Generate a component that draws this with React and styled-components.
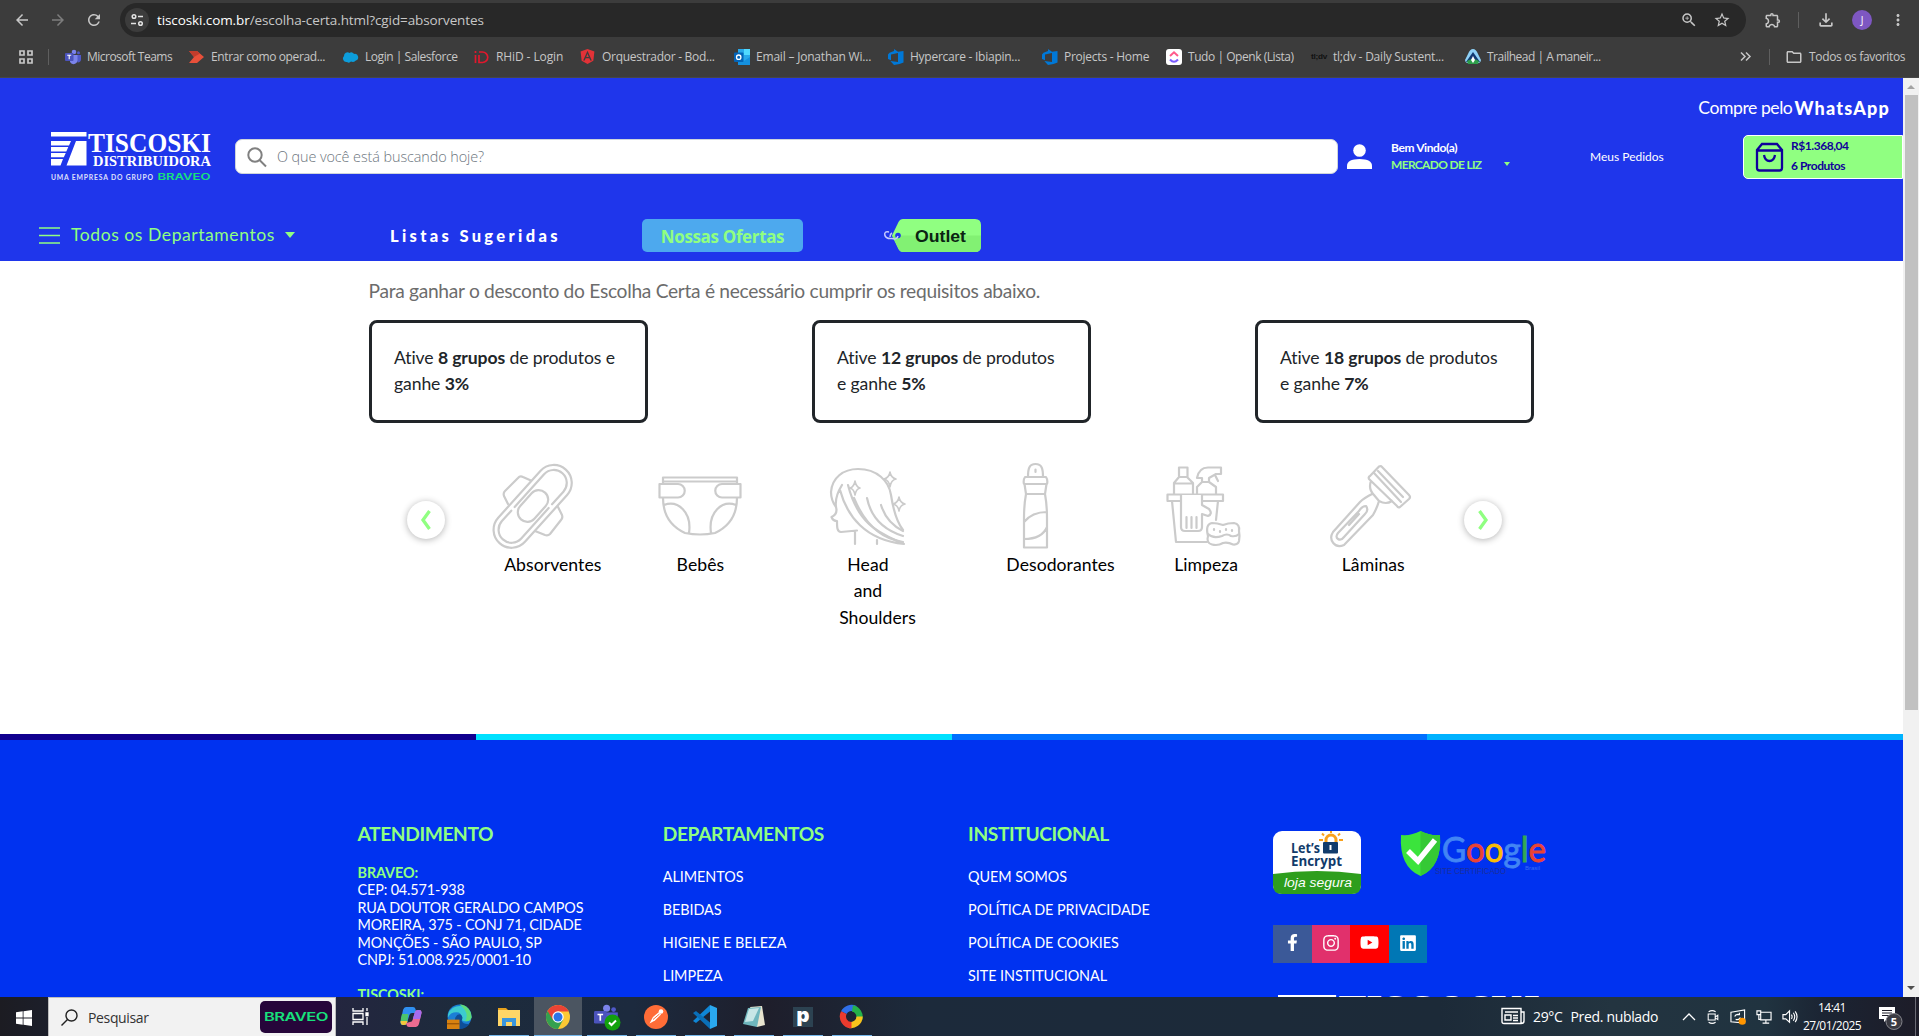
import React from "react";
import styled, { createGlobalStyle, css } from "styled-components";
import { FaFacebookF, FaInstagram, FaYoutube, FaLinkedin, FaAngular } from "react-icons/fa";
import {
  MdArrowBack, MdArrowForward, MdRefresh, MdOutlineZoomIn, MdStarBorder,
  MdOutlineExtension, MdOutlineFileDownload, MdMoreVert, MdOutlineFolder,
} from "react-icons/md";

const Global = createGlobalStyle`
  * { box-sizing: border-box; }
  html, body { margin: 0; height: 1036px; overflow: hidden; background: #fff; }
  body { font-family: Lato, "Liberation Sans", sans-serif; }
  svg { display: block; flex: none; overflow: visible; }
`;

const ui = `"Open Sans", "Noto Sans", sans-serif`;

const Screen = styled.div`
  width: 1919px;
  height: 1036px;
  display: flex;
  flex-direction: column;
  overflow: hidden;
`;

/* ---------- browser ---------- */
const Chrome = styled.header`
  height: 78px;
  flex: none;
  background: #3c3c3c;
  border-bottom: 1px solid #474747;
  font-family: ${ui};
  color: #c7c7c7;
`;
const Toolbar = styled.div`
  display: flex;
  align-items: center;
  height: 40px;
  padding: 3px 0 3px 13px;
`;
const NavIcons = styled.div`
  display: flex;
  gap: 18px;
  width: 107px;
  flex: none;
  align-items: center;
  color: #c7c7c7;
  svg:nth-child(2) { color: #7d7d7d; }
`;
const Omnibox = styled.div`
  display: flex;
  flex: none;
  align-items: center;
  width: 1626px;
  height: 34px;
  padding: 0 15px 0 5px;
  border-radius: 17px;
  background: #282828;
  font-size: 13.5px;
  letter-spacing: ${(p) => p.$ls}px;
  white-space: pre;
  b { font-weight: 400; color: #fff; }
`;
const SiteInfo = styled.span`
  width: 24px;
  height: 24px;
  margin-right: 8px;
  border-radius: 50%;
  background: #3c3c3c;
  display: grid;
  place-items: center;
`;
const OmniEnd = styled.span`
  margin-left: auto;
  display: flex;
  gap: 15px;
`;
const ToolEnd = styled.div`
  display: flex;
  flex: none;
  align-items: center;
  padding-left: 18px;
`;
const Sep = styled.i`
  width: 1px;
  height: 16px;
  flex: none;
  background: #5f5f5f;
  margin: ${(p) => p.$m};
`;
const Avatar = styled.span`
  width: 20px;
  height: 20px;
  margin: 0 17px 0 16px;
  border-radius: 50%;
  background: #7e57c2;
  color: #fff;
  font-size: 10px;
  display: grid;
  place-items: center;
`;
const Bookmarks = styled.div`
  display: flex;
  align-items: center;
  height: 33px;
  padding-left: 19px;
  font-size: 12px;
`;
const Bookmark = styled.div`
  display: flex;
  align-items: center;
  gap: 6px;
  width: ${(p) => p.$w}px;
  white-space: nowrap;
  letter-spacing: ${(p) => p.$ls}px;
`;
const BookmarkEnd = styled.div`
  display: flex;
  align-items: center;
  margin-left: auto;
  padding-right: 14px;
`;

/* ---------- page ---------- */
const Viewport = styled.div`
  display: flex;
  height: 919px;
  flex: none;
  overflow: hidden;
`;
const Page = styled.div`
  width: 1903px;
  flex: none;
  display: flex;
  flex-direction: column;
`;
const Scrollbar = styled.div`
  width: 16px;
  background: #f1f1f1;
  display: flex;
  flex-direction: column;
  align-items: center;
  justify-content: space-between;
`;
const ScrollTop = styled.div`
  display: flex;
  flex-direction: column;
  align-items: center;
  padding-top: 7px;
  gap: 6px;
  &::after { content: ""; width: 13px; height: 615px; background: #c1c1c1; }
`;
const Arrow = styled.i`
  width: 0;
  border: 4px solid transparent;
  ${(p) => p.$up
    ? css`border-top: 0; border-bottom-color: #a3a3a3;`
    : css`border-bottom: 0; border-top-color: #505050; margin-bottom: 7px;`}
`;

const Header = styled.div`
  height: 183px;
  background: #1f36eb;
  color: #fff;
`;
const TopLine = styled.div`
  height: 57px;
  padding: 18px 13px 0 0;
  display: flex;
  justify-content: flex-end;
  gap: 2px;
  font-size: 17.6px;
  line-height: 24px;
  letter-spacing: -0.45px;
  b { font-size: 18px; letter-spacing: 1.2px; font-weight: 900; }
`;
const MainRow = styled.div`
  height: 44px;
  padding: 0 0 1px 51px;
  display: flex;
  align-items: center;
`;
const Search = styled.div`
  width: 1103px;
  height: 35px;
  margin: 0 9px 0 24px;
  padding-left: 11px;
  display: flex;
  align-items: center;
  gap: 10px;
  background: #fff;
  border: 1px solid #ced4da;
  border-radius: 7px;
  color: #6c757d;
  font: 300 14.4px ${ui};
  letter-spacing: -0.08px;
`;
const Account = styled.div`
  width: 199px;
  margin-left: 19px;
  padding-bottom: 2px;
  display: flex;
  flex-direction: column;
  font-weight: 700;
  font-size: 12px;
  line-height: 17px;
  letter-spacing: -0.4px;
`;
const AccountName = styled.span`
  display: flex;
  align-items: center;
  gap: 23px;
  color: #90ff81;
  letter-spacing: -0.67px;
`;
const Caret = styled.i`
  width: 0;
  border: solid transparent;
  border-width: ${(p) => p.$s}px ${(p) => p.$s * 0.85}px 0;
  border-top-color: #90ff81;
`;
const Orders = styled.div`
  width: 153px;
  font-size: 12px;
  padding-bottom: 1px;
`;
const Cart = styled.div`
  width: 160px;
  height: 44px;
  margin-top: 1px;
  padding-left: 11px;
  display: flex;
  align-items: center;
  gap: 8px;
  background: #90ff81;
  border: 1px solid #fff;
  border-radius: 5px 0 0 5px;
  color: #10009b;
  font-weight: 700;
  font-size: 12px;
  line-height: 20px;
  letter-spacing: -0.45px;
`;
const CartText = styled.div`
  padding-bottom: 3px;
`;
const Nav = styled.nav`
  height: 82px;
  padding: 31px 0 0 39px;
  display: flex;
  align-items: center;
`;
const Departments = styled.div`
  width: 351px;
  padding-bottom: 2px;
  display: flex;
  align-items: center;
  gap: 10px;
  color: #90ff81;
  font-size: 17.6px;
  letter-spacing: 0.53px;
  svg { margin: 1px 1px 0 0; }
`;
const Suggested = styled.div`
  width: 252px;
  font-size: 16.5px;
  font-weight: 900;
  letter-spacing: 3.33px;
`;
const Offers = styled.div`
  width: 161px;
  height: 33px;
  margin-right: 81px;
  padding-top: 1px;
  display: grid;
  place-items: center;
  border-radius: 5px;
  background: #4da9ee;
  color: #90ff81;
  font: 700 17px ${ui};
  letter-spacing: -0.35px;
`;

const Main = styled.main`
  height: 473px;
  padding: 17px 369px 0;
  background: #fff;
`;
const Intro = styled.p`
  margin: 0 0 0 -0.5px;
  font-size: 19.2px;
  line-height: 26px;
  letter-spacing: -0.3px;
  color: #6c6c6c;
`;
const Goals = styled.div`
  display: flex;
  justify-content: space-between;
  margin-top: 16px;
`;
const Goal = styled.div`
  width: 279px;
  height: 103px;
  padding: 22px 25px 0 22px;
  border: 3px solid #212529;
  border-radius: 8px;
  font-size: 17.6px;
  line-height: 26.4px;
  letter-spacing: -0.11px;
  color: #212529;
  b { font-weight: 700; }
`;
const Carousel = styled.div`
  display: flex;
  align-items: flex-start;
  padding: 40px 0 0 38px;
`;
const Round = styled.button`
  width: 38px;
  height: 38px;
  margin-top: 38px;
  padding: 0;
  border: 0;
  border-radius: 50%;
  background: #fff;
  box-shadow: 0 1px 7px rgba(0, 0, 0, 0.3);
  display: grid;
  place-items: center;
`;
const Items = styled.div`
  display: grid;
  grid-template-columns: repeat(6, 167.6px);
  margin: 0 9px 0 4px;
`;
const Item = styled.div`
  display: flex;
  flex-direction: column;
  align-items: center;
`;
const Picture = styled.div`
  height: 86px;
  margin-bottom: 3px;
  display: flex;
  align-items: center;
`;
const Caption = styled.div`
  display: flex;
  flex-direction: column;
  align-items: center;
  padding-left: ${(p) => p.$shift}px;
  color: #000;
  font-size: 17.6px;
  line-height: 26.4px;
  letter-spacing: 0.05px;
  span:nth-child(3) { padding-left: 19px; }
`;

const Stripes = styled.div`
  height: 6px;
  display: grid;
  grid-template-columns: repeat(4, 1fr);
`;
const Stripe = styled.i`
  background: ${(p) => p.$c};
`;
const Footer = styled.footer`
  height: 257px;
  flex: none;
  padding: 82px 0 0 357.5px;
  display: grid;
  grid-template-columns: 305.3px 305.3px 305.3px 1fr;
  background: #0032f0;
  color: #fff;
  overflow: hidden;
`;
const FootTitle = styled.h4`
  margin: 0;
  font-size: 19.2px;
  line-height: 24px;
  font-weight: 700;
  letter-spacing: -0.4px;
  color: #90ff81;
`;
const Address = styled.div`
  margin-top: 18px;
  font-size: 14.4px;
  line-height: 17.4px;
  letter-spacing: -0.14px;
  white-space: nowrap;
  b { color: #90ff81; display: block; letter-spacing: -0.1px; }
`;
const Links = styled.div`
  margin-top: 14px;
  display: flex;
  flex-direction: column;
  font-size: 14.4px;
  line-height: 33px;
  letter-spacing: -0.06px;
`;
const Badges = styled.div`
  padding-top: 9px;
`;
const Seals = styled.div`
  display: flex;
  gap: 40px;
`;
const Social = styled.div`
  display: flex;
  margin: 31px 0 30px;
`;
const SocialLink = styled.a`
  width: 38.5px;
  height: 38px;
  padding-bottom: 3px;
  display: grid;
  place-items: center;
  background: ${(p) => p.$c};
  color: #fff;
`;
const FootLogo = styled.div`
  padding-left: 5px;
`;

/* ---------- taskbar ---------- */
const Taskbar = styled.div`
  height: 39px;
  flex: none;
  display: flex;
  background: linear-gradient(90deg, #1c1c22 0%, #1c1f2c 3%, #24253f 17%, #1d2b3c 24%, #1c2a3e 33%, #1e1e2b 40%, #1c2a3b 48%, #1c2a38 75%, #233440 84%, #203340 92%, #1b2433 95%, #1d1c28 100%);
  color: #fff;
  font-family: ${ui};
`;
const Start = styled.div`
  width: 48px;
  padding-top: 2px;
  display: grid;
  place-items: center;
`;
const TaskSearch = styled.div`
  width: 288px;
  display: flex;
  align-items: center;
  padding: 0 3px 0 12px;
  background: #f2f2f2;
  border: 1px solid #bdbdbd;
  border-bottom: 0;
  color: #333;
  font-size: 14px;
  letter-spacing: -0.35px;
  span { margin-left: 10px; }
`;
const Brand = styled.div`
  width: 72px;
  height: 32px;
  margin-left: auto;
  border-radius: 5px;
  background: #26063a;
  display: grid;
  place-items: center;
`;
const TaskIcons = styled.div`
  display: flex;
  gap: 1px;
  > :first-child { margin-right: 1.5px; }
`;
const Task = styled.div`
  width: ${(p) => (p.$open && !p.$on ? "40px" : "48px")};
  margin: 0 ${(p) => (p.$open && !p.$on ? "4px" : "0")};
  height: 39px;
  display: flex;
  align-items: center;
  justify-content: center;
  background: ${(p) => (p.$on ? "#4b5561" : "none")};
  box-shadow: ${(p) => (p.$open ? "inset 0 -1px 0 #76b9ed" : "none")};
`;
const Tray = styled.div`
  margin-left: auto;
  display: flex;
  align-items: center;
  font-size: 14px;
  white-space: nowrap;
`;
const Weather = styled.div`
  width: 181px;
  padding-bottom: 1px;
  display: flex;
  gap: 8px;
  align-items: center;
  letter-spacing: ${(p) => p.$ls}px;
`;
const TrayIcons = styled.div`
  display: flex;
  align-items: center;
  width: 120px;
  gap: 10px;
`;
const Clock = styled.div`
  width: 60px;
  margin-right: 16px;
  text-align: center;
  font-size: 12px;
  line-height: 17.5px;
  letter-spacing: -0.55px;
`;
const Desktop = styled.i`
  width: 1px;
  height: 39px;
  margin: 0 3px 0 12px;
  background: #6b6b75;
`;

/* ---------- drawings ---------- */
const Logo = ({ width, height }) => (
  <svg width={width} height={height} viewBox="0 0 160 51" fill="#fff">
    <path d="M0 1h35.500v4.500H0zM0 10h20l-2 4.500H0zM0 16h17.300l-2 4.500H0zM0 22h14.800l-2 4.300H0zM0 28h12l-2.500 6.500H0zM25 10h10.500v24.500H15.500z" />
    <text x="37" y="20.500" fontFamily="Liberation Serif" fontWeight="700" fontSize="28" textLength="123" lengthAdjust="spacingAndGlyphs">TISCOSKI</text>
    <text x="42" y="35" fontFamily="Liberation Serif" fontWeight="700" fontSize="15.500" textLength="118" lengthAdjust="spacingAndGlyphs">DISTRIBUIDORA</text>
    <text x="0" y="48.500" fontFamily="Lato" fontWeight="700" fontSize="6.800" textLength="102" lengthAdjust="spacing" opacity=".85">UMA EMPRESA DO GRUPO</text>
    <text x="106.500" y="49" fontFamily="Inter" fontWeight="600" fontSize="9" fill="#17e07c" textLength="53" lengthAdjust="spacingAndGlyphs">BRAVEO</text>
  </svg>
);
const Lines = ({ w, h, children }) => (
  <svg width={w} height={h} viewBox={`0 0 ${w} ${h}`} fill="none" stroke="#cbcbcb" strokeWidth="2.200" strokeLinejoin="round" strokeLinecap="round">{children}</svg>
);
const Pad = () => (
  <Lines w={84} h={84}>
    <path d="M41 17l-9-4q-3-1.500-5 1L14 27q-2 2-1 5l4 8M67 43l4 8q1 3-1 5L59 70q-2 2-5 1l-10-4" />
    <g transform="translate(42 42) rotate(-48)">
      <rect x="-50" y="-18" width="99" height="36" rx="18" fill="#fff" />
      <path d="M-13-13H31a13 13 0 0 1 0 26H14M9 13H-32a13 13 0 0 1 0-26H-18" />
      <rect x="-18" y="-9.500" width="36" height="19" rx="9.500" />
    </g>
  </Lines>
);
const Diaper = () => (
  <Lines w={84} h={60}>
    <path d="M5 8V1.500H79V8M5 5.500H79M1.500 8H20a6.500 6.500 0 0 1 0 13.500H1.500zM82.500 8H64a6.500 6.500 0 0 0 0 13.500H82.500zM5 22C5 38 12 50 27 57Q42 60 57 57C72 50 79 38 79 22M6 29C20 24 34 36 31 57M78 29C64 24 50 36 53 57" />
  </Lines>
);
const Hair = () => (
  <Lines w={77} h={77}>
    <path d="M7 39C4 35 2 30 2 24C3 10 14 1 29 1C48 1 60 13 62 27C64 40 67 53 74 62M7 39Q9 46 2.500 49Q4 53 8 53C8 59 8 64 12 64L28 62.500M26 64V76M48 72V76M13 17C8 25 6 32 7 39M11 22C18 48 36 72 75 76C54 66 30 60 19 17" />
    <path d="M25 30C34 52 48 70 74 74M38 30C42 50 55 62 74 68M52 37C56 50 64 58 74 63" />
    <path strokeWidth="1.600" d="M26 13Q27 19 31 20Q27 21 26 27Q25 21 21 20Q25 19 26 13zM61 4Q62 10 67 11Q62 12 61 19Q60 12 55 11Q60 10 61 4zM70 29Q71 35 76 36Q71 37 70 43Q69 37 64 36Q69 35 70 29z" />
  </Lines>
);
const Spray = () => (
  <Lines w={27} h={86}>
    <path d="M6 14C6 6 7 1 13.500 1S21 6 21 14M3 14H24Q26 17 25 21H2Q1 17 3 14zM2.500 21 4 31H23L24.500 21M4 31Q2 42 2 55V84.500H25V55Q25 42 23 31M2 59Q10 49 25 49M2 76Q20 76 25 64M13.500 6.500V9" />
  </Lines>
);
const Bucket = () => (
  <Lines w={75} h={80}>
    <path d="M1.500 28.500H57V35H1.500zM6 35 10 76H41M52 35 50 54M8 28V17L13 11H21L27 17V28M13 11V1.500H21.500V11M8 17.500H27M31 28V21L36 16H43L50 21V28M36 16V12H31Q33 1.500 42 1.500H55V8H50L43 12V16M49 9 52 15" />
    <path fill="#fff" d="M15 29V61Q15 65 19 65H32Q36 65 36 61V48L42 50Q47 48 43 43L36 39V29" />
    <path d="M20.500 51V62M25.500 51V62M30.500 51V62" />
    <path fill="#fff" d="M46 57Q51 57 57 59Q62 57 68 57Q74 58 73 65Q74 70 73 75Q72 79 67 78.500Q62 76 57 77Q52 80 46 78.500Q40 77 42 70Q39 58 46 57z" />
    <path d="M42 68Q47 73 56 70Q61 67 65 70Q70 71 73 68M48 63V64M54 65V66M60 63V64M66 64V65" />
  </Lines>
);
const Razor = () => (
  <Lines w={83} h={83}>
    <path d="M50 1.500Q52 .5 53 2L80 30Q82 32 80 34L71 42Q69 43 68 41L40 14Q39 12 41 11zM45 8 72 37M49 6 74 32M42 16Q39 24 45 30L50 36Q57 40 63 36M43 29Q35 33 31 37L4 67C-1 75 6 84 15 80L44 50Q48 43 50 36" />
    <path d="M37 41Q33 41 30 46L9 68Q6 72 9 74Q12 76 15 72L36 49Q40 45 37 41zM30 49 20 60" />
  </Lines>
);
const LetsEncrypt = () => (
  <svg width="88" height="63" viewBox="0 0 88 63">
    <rect width="88" height="63" rx="9" fill="#fff" />
    <path d="M0 43Q44 37 88 43V54Q88 63 79 63H9Q0 63 0 54z" fill="#2e9e1d" />
    <g stroke="#f9a11b" strokeWidth="2" fill="none">
      <path d="M53 12V9a5 5 0 0 1 10 0v3" strokeWidth="3" />
      <path d="M46 9h4M66 9h4M49 2.500l2 2M67 2.500l-2 2M58 0v2" />
    </g>
    <rect x="50" y="11" width="15" height="11.500" rx="1" fill="#113b6b" />
    <path d="M57.500 14v5" stroke="#fff" strokeWidth="2" />
    <g fontFamily="Open Sans" fontWeight="700" fill="#113b6b">
      <text x="18" y="22" fontSize="14" textLength="29" lengthAdjust="spacingAndGlyphs">Let’s</text>
      <text x="18" y="34.500" fontSize="14" textLength="51" lengthAdjust="spacingAndGlyphs">Encrypt</text>
    </g>
    <text x="11" y="55.500" fontFamily="Liberation Sans" fontStyle="italic" fontSize="13.500" fill="#fff" textLength="68" lengthAdjust="spacingAndGlyphs">loja segura</text>
  </svg>
);
const GoogleSeal = () => (
  <svg width="147" height="46" viewBox="0 0 147 46">
    <path d="M0 4Q10 5 19.500 0Q29 5 39 4Q41 36 19.500 45Q-2 36 0 4z" fill="#3be43c" />
    <path d="M19.500 0Q29 5 39 4Q41 36 19.500 45z" fill="#35c935" />
    <path d="M7 20 17 30 34 9" fill="none" stroke="#fff" strokeWidth="5.500" />
    <text x="41" y="31" fontFamily="Lato" fontSize="35" textLength="104" lengthAdjust="spacingAndGlyphs" strokeWidth=".9">
      <tspan fill="#4285f4" stroke="#4285f4">G</tspan><tspan fill="#ea4335" stroke="#ea4335">o</tspan><tspan fill="#fbbc05" stroke="#fbbc05">o</tspan><tspan fill="#4285f4" stroke="#4285f4">g</tspan><tspan fill="#34a853" stroke="#34a853">l</tspan><tspan fill="#ea4335" stroke="#ea4335">e</tspan>
    </text>
    <text x="34" y="43" fontFamily="Liberation Sans" fontSize="9" fill="#1b2f9c" textLength="71" lengthAdjust="spacingAndGlyphs">SITE CERTIFICADO</text>
    <text x="124" y="38.500" fontFamily="Liberation Sans" fontSize="6" fill="#3b6df2" textLength="15">Brasil</text>
  </svg>
);
const Outlet = () => (
  <svg width="98" height="33" viewBox="0 0 98 33">
    <path d="M19 0H91q6 0 6 6V27q0 6-6 6H19q-3 0-4.500-3L8 16.500 14.500 3Q16 0 19 0z" fill="#90ff81" />
    <path d="M8 16.500H97V27q0 6-6 6H19q-3 0-4.500-3z" fill="#82f173" />
    <circle cx="14" cy="16.500" r="2.800" fill="#1f36eb" />
    <path d="M5 13Q0 12 .8 16T8 19.500Q13 21 14 17M6 18q0-3 2-4" fill="none" stroke="#c6cbff" strokeWidth="1.500" />
    <text x="31" y="22.500" fontFamily="Liberation Sans" fontWeight="700" fontSize="17" fill="#0b2413" textLength="51" lengthAdjust="spacingAndGlyphs">Outlet</text>
  </svg>
);
const BraveoMark = () => (
  <svg width="66" height="16" viewBox="0 0 66 16" fill="#17e07c">
    <text x="1" y="12" fontFamily="Inter" fontWeight="600" fontSize="11.500" textLength="64" lengthAdjust="spacingAndGlyphs">BRAVEO</text>
  </svg>
);
const Svg = ({ s = 16, v = 16, children, ...r }) => (
  <svg width={s} height={s} viewBox={`0 0 ${v} ${v}`} fill="none" {...r}>{children}</svg>
);
const TeamsIcon = ({ s = 16 }) => (
  <Svg s={s}>
    <circle cx="9" cy="3" r="2.300" fill="#7b83eb" /><circle cx="13.500" cy="3.800" r="1.500" fill="#5059c9" />
    <path d="M11 6h5v4.500a3 3 0 0 1-3.500 3z" fill="#5059c9" /><path d="M5 6h7.500v5.500a4 4 0 0 1-7.500 1.500z" fill="#7b83eb" />
    <rect y="4" width="8.500" height="8" rx="1" fill="#4b53bc" /><path d="M2.200 6.200h4M4.200 6.200v4" stroke="#fff" strokeWidth="1.100" />
  </Svg>
);
const Devops = () => <Svg><path d="M0 5.500 1.500 3.700 6 2V0l4 2.800L15.500 2v11.500L11.500 15 6 16l-3-3.200L2.500 12 10 13V4L3 5.600v5.600L0 10z" fill="#0078d7" /></Svg>;

const bookmarks = [
  ["Microsoft Teams", 124, <TeamsIcon />, -0.52],
  ["Entrar como operad...", 154, <Svg><path d="M0 2h8l7 6-7 6H0l5-6z" fill="#e8503a" /><path d="M0 2h8l3 2.500L5 8z" fill="#c23c2c" /></Svg>, -0.38],
  ["Login | Salesforce", 131, <Svg><path d="M4 13a3.500 3.500 0 0 1-3-6A3.500 3.500 0 0 1 6.500 4 3 3 0 0 1 11 5a3.400 3.400 0 1 1 1.500 6.700A4 4 0 0 1 8 12.600 3 3 0 0 1 4 13z" fill="#0d9ddb" /></Svg>, -0.45],
  ["RHiD - Login", 105, <Svg><path d="M1.500 2v2M1.500 6v8M5 3h3.500a5 5 0 0 1 0 10.500H5V6" stroke="#e0182d" strokeWidth="1.700" /></Svg>, -0.1],
  ["Orquestrador - Bod...", 155, <FaAngular size={17} color="#e23237" />, -0.28],
  ["Email – Jonathan Wi...", 154, <Svg><path d="M4 0h12v15H4z" fill="#28a8ea" /><path d="M10 0h6v6h-6z" fill="#50d9ff" /><path d="M4 8 10 12 16 8v8H4z" fill="#1490df" /><rect y="3.500" width="9.500" height="9.500" rx="1" fill="#0364b8" /><circle cx="4.700" cy="8.200" r="2.200" stroke="#fff" strokeWidth="1.300" /></Svg>, -0.2],
  ["Hypercare - Ibiapin...", 154, <Devops />, -0.25],
  ["Projects - Home", 124, <Devops />, -0.25],
  ["Tudo | Openk (Lista)", 145, <Svg><rect width="16" height="16" rx="3" fill="#fff" /><path d="M4 7l4-3.700L12 7" stroke="#ff5a8a" strokeWidth="2" /><path d="M4 10.500q4 4.500 8 0" stroke="#7b5cff" strokeWidth="2" /></Svg>, -0.45],
  ["tl;dv - Daily Sustent...", 154, <Svg><text x="0" y="10" fontFamily="Liberation Sans" fontWeight="700" fontSize="7" fill="#111" textLength="16" lengthAdjust="spacingAndGlyphs">tl;dv</text></Svg>, -0.22],
  ["Trailhead | A maneir...", 140, <Svg><path d="M8 0q3 0 5 5l3 6q0 2-2 3H2q-2-1-2-3l3-6Q5 0 8 0z" fill="#8ed1f7" /><path d="M8 3 15 13H1z" fill="#123a72" /><path d="M2 12q6-4 12 0l-1 3H3z" fill="#2e9e4b" /><path d="M8 7l2 4-2 3-2-3z" fill="#fff" /></Svg>, -0.5],
];

const goals = [
  ["8 grupos", " de produtos e ganhe ", "3%"],
  ["12 grupos", " de produtos e ganhe ", "5%"],
  ["18 grupos", " de produtos e ganhe ", "7%"],
];
const items = [
  [["Absorventes"], 40, <Pad />],
  [["Bebês"], 0, <Diaper />],
  [["Head", "and", "Shoulders"], 0, <Hair />],
  [["Desodorantes"], 50, <Spray />],
  [["Limpeza"], 6, <Bucket />],
  [["Lâminas"], 5, <Razor />],
];

const tasks = [
  [<Svg s={17} v={17} stroke="#fff" strokeWidth="1.300"><path d="M1 0v3h10V0M1 17v-3h10v3M1 5.500h10v6H1zM15 0v3M15 9v8" /><path d="M14 5h2v2.500h-2z" fill="#fff" /></Svg>],
  [<Svg s={24} v={24}><path d="M7 2h7q2 0 2.500 2l1 4H13q-2 0-2.600 2L8 18q-.6 2-3 2H4q-3 0-2.500-3L4 5q1-3 3-3z" fill="#2f8ff0" /><path d="M2 13 3 9h6.500L8 18q-.6 2-3 2H4q-3 0-2-7z" fill="#4cc46a" /><path d="M1.500 16h7L8 18q-.6 2-3 2H4q-2.500 0-2.500-4z" fill="#f3c53c" /><path d="M17 22h-7q-2 0-2.500-2l-.6-2Q8 18 9 17.500L11 17q2 0 2.600-2L16 7q.6-2 3-2h1q3 0 2.500 3L20 19q-1 3-3 3z" fill="#ec6b90" /><path d="M15 10l1-3q.6-2 3-2h1q3 0 2.500 3l-1.500 6h-7.200z" fill="#a56cf0" /></Svg>],
  [<Svg s={25} v={24}><circle cx="12" cy="12" r="11.500" fill="#1b7fd6" /><path d="M1 10A11.500 11.500 0 0 1 23.500 13q-1 4-6 3.500-4 0-3-3Q14 8 9 8 3 8 1 13z" fill="#3ccbd0" /><path d="M12 .5A11.500 11.500 0 0 1 23.500 13q-1 4-6 3.500Q22 8 12 .5z" fill="#5fdc7a" /><path d="M14 16q2 4 8 3-4 5-10 5-6-3-4-11 2-4 5-3 3 2 1 6z" fill="#0e4f98" /><rect x="0" y="15" width="12" height="9" fill="#d9820f" /><path d="M0 19h12" stroke="#8a4a05" /></Svg>],
  [<Svg s={22} v={22}><path d="M0 2h8l2 2H0z" fill="#e8a21c" /><path d="M0 4h22v16H0z" fill="#ffd667" /><path d="M4 20v-8h14v8h-4v-4H8v4z" fill="#3a96dd" /></Svg>, true],
  [<Svg s={24} v={24}><circle cx="12" cy="12" r="12" fill="#fcc934" /><path d="M12 12 1.600 6A12 12 0 0 0 12 24l5-9z" fill="#34a04f" /><path d="M12 6.500h10.700A12 12 0 0 0 1.600 6L7 15z" fill="#ea4335" /><circle cx="12" cy="12" r="5.700" fill="#fff" /><circle cx="12" cy="12" r="4.500" fill="#2b74e8" /></Svg>, true, true],
  [<Svg s={26} v={26}><g transform="scale(1.4)"><circle cx="9" cy="3" r="2.500" fill="#7b83eb" /><circle cx="14" cy="4" r="1.700" fill="#5059c9" /><path d="M5 6h12v6H5z" fill="#5059c9" /><rect y="5" width="9" height="9" rx="1" fill="#4b53bc" /><path d="M2.500 7.500h4M4.500 7.500v4.500" stroke="#fff" strokeWidth="1.200" /></g><circle cx="18.500" cy="18.500" r="8" fill="#13a10e" /><path d="M15 18.500l2.500 2.500 4.500-4.500" stroke="#fff" strokeWidth="2" /></Svg>, true],
  [<Svg s={24} v={24}><circle cx="12" cy="12" r="12" fill="#ff6c37" /><path d="M5.500 18.500 9 12 15 7l2 2.500-6 6z" fill="#fff" /><path d="M9 14.500 15.500 9" stroke="#ff6c37" /><circle cx="17" cy="6.500" r="2.300" fill="#fff" /></Svg>, true],
  [<Svg s={24} v={24}><path d="M17 0 24 3V21L17 24z" fill="#2aa9f0" /><path d="M17 0v6.500L3 18 0 16z" fill="#0f86d6" /><path d="M17 24v-6.500L3 6 0 8z" fill="#0a6fb8" /></Svg>, true],
  [<Svg s={24} v={24}><path d="M8 2 20 1 23 20 15 22z" fill="#e8e4cf" /><path d="M6 3 19 2 15 22 1 19z" fill="#6fb6bd" /><path d="M7 4 17 3 11 16 3 17z" fill="#c7e6e6" /></Svg>, true],
  [<Svg s={20} v={22}><rect width="22" height="22" fill="#2c4251" /><text x="11" y="16" textAnchor="middle" fontFamily="Inter" fontWeight="900" fontSize="22" fill="#fff">p</text></Svg>, true],
  [<Svg s={23} v={24} strokeWidth="6.500"><path d="M4 8a9 9 0 0 1 12-4" stroke="#2f6fe8" /><path d="M13 3.500A9 9 0 0 1 20 15" stroke="#25b24a" /><path d="M20.500 12A9 9 0 0 1 9 20.500" stroke="#f8c41c" /><path d="M12 21A9 9 0 0 1 4 8" stroke="#ea3b2e" /></Svg>, true],
];

const Burger = () => (
  <svg width="21" height="17" viewBox="0 0 21 17"><path d="M0 1h21M0 8.500h21M0 16h21" stroke="#90ff81" strokeWidth="1.600" /></svg>
);

export default function App() {
  return (
    <Screen>
      <Global />
      <Chrome>
        <Toolbar>
          <NavIcons><MdArrowBack size={18} /><MdArrowForward size={18} /><MdRefresh size={18} /></NavIcons>
          <Omnibox $ls={-0.1}>
            <SiteInfo>
              <Svg s={14} v={14} stroke="#e3e3e3" strokeWidth="1.500"><circle cx="4" cy="3.500" r="1.800" /><path d="M8 3.500h5M1 10.500h5" /><circle cx="10.500" cy="10.500" r="1.800" /></Svg>
            </SiteInfo>
            <b>tiscoski.com.br</b>/escolha-certa.html?cgid=absorventes
            <OmniEnd><MdOutlineZoomIn size={18} /><MdStarBorder size={18} /></OmniEnd>
          </Omnibox>
          <ToolEnd>
            <MdOutlineExtension size={18} />
            <Sep $m="0 17px 0 16px" />
            <MdOutlineFileDownload size={20} />
            <Avatar>J</Avatar>
            <MdMoreVert size={18} />
          </ToolEnd>
        </Toolbar>
        <Bookmarks>
          <Svg s={14} v={14} stroke="#c7c7c7" strokeWidth="1.700"><path d="M1 1h4v4H1zM9 1h4v4H9zM1 9h4v4H1zM9 9h4v4H9z" /></Svg>
          <Sep $m="0 16px 0 15px" />
          {bookmarks.map(([label, w, icon, ls]) => (
            <Bookmark key={label} $w={w} $ls={ls}>{icon}{label}</Bookmark>
          ))}
          <BookmarkEnd>
            <Svg s={11} v={11} stroke="#c7c7c7" strokeWidth="1.500"><path d="M1 1.500l4 4-4 4M6 1.500l4 4-4 4" /></Svg>
            <Sep $m="0 15px 0 18px" />
            <Bookmark $w={120} $ls={-0.34}><MdOutlineFolder size={18} />Todos os favoritos</Bookmark>
          </BookmarkEnd>
        </Bookmarks>
      </Chrome>

      <Viewport>
        <Page>
          <Header>
            <TopLine><span>Compre pelo</span><b>WhatsApp</b></TopLine>
            <MainRow>
              <Logo width={160} height={51} />
              <Search>
                <Svg s={20} v={20} stroke="#808080" strokeWidth="2"><circle cx="8" cy="8" r="6.700" /><path d="M12.500 13 19 19.500" /></Svg>
                O que você está buscando hoje?
              </Search>
              <Svg s={25} v={25} fill="#fff"><circle cx="12.500" cy="6.500" r="6.300" /><path d="M0 25v-3q0-7 12.500-7T25 22v3z" /></Svg>
              <Account>
                <span>Bem Vindo(a)</span>
                <AccountName>MERCADO DE LIZ <Caret $s={4.3} /></AccountName>
              </Account>
              <Orders>Meus Pedidos</Orders>
              <Cart>
                <Svg s={28} v={28} stroke="#10009b" strokeWidth="2.300"><path d="M2 7 7 1H22L27 7V25Q27 27.500 24.500 27.500H4.500Q2 27.500 2 25zM2 7.500H27M9 12q1 6 5.500 6T20 12" /></Svg>
                <CartText>R$1.368,04<br />6 Produtos</CartText>
              </Cart>
            </MainRow>
            <Nav>
              <Departments><Burger />Todos os Departamentos<Caret $s={6.5} /></Departments>
              <Suggested>Listas Sugeridas</Suggested>
              <Offers>Nossas Ofertas</Offers>
              <Outlet />
            </Nav>
          </Header>

          <Main>
            <Intro>Para ganhar o desconto do Escolha Certa é necessário cumprir os requisitos abaixo.</Intro>
            <Goals>
              {goals.map(([n, mid, pct]) => (
                <Goal key={n}>Ative <b>{n}</b>{mid}<b>{pct}</b></Goal>
              ))}
            </Goals>
            <Carousel>
              <Round><svg width="12" height="22" viewBox="0 0 12 22"><path d="M9.500 2 3 11l6.500 9" fill="none" stroke="#90ff81" strokeWidth="3.300" /></svg></Round>
              <Items>
                {items.map(([label, shift, art]) => (
                  <Item key={label[0]}>
                    <Picture>{art}</Picture>
                    <Caption $shift={shift}>{label.map((l) => <span key={l}>{l}</span>)}</Caption>
                  </Item>
                ))}
              </Items>
              <Round><svg width="12" height="22" viewBox="0 0 12 22"><path d="M2.500 2 9 11l-6.500 9" fill="none" stroke="#90ff81" strokeWidth="3.300" /></svg></Round>
            </Carousel>
          </Main>

          <Stripes>
            <Stripe $c="#10008f" /><Stripe $c="#00e1ff" /><Stripe $c="#006eff" /><Stripe $c="#00b2ff" />
          </Stripes>
          <Footer>
            <div>
              <FootTitle>ATENDIMENTO</FootTitle>
              <Address>
                <b>BRAVEO:</b>
                CEP: 04.571-938<br />RUA DOUTOR GERALDO CAMPOS<br />MOREIRA, 375 - CONJ 71, CIDADE<br />MONÇÕES - SÃO PAULO, SP<br />CNPJ: 51.008.925/0001-10
              </Address>
              <Address><b>TISCOSKI:</b></Address>
            </div>
            <div>
              <FootTitle>DEPARTAMENTOS</FootTitle>
              <Links><span>ALIMENTOS</span><span>BEBIDAS</span><span>HIGIENE E BELEZA</span><span>LIMPEZA</span></Links>
            </div>
            <div>
              <FootTitle>INSTITUCIONAL</FootTitle>
              <Links><span>QUEM SOMOS</span><span>POLÍTICA DE PRIVACIDADE</span><span>POLÍTICA DE COOKIES</span><span>SITE INSTITUCIONAL</span></Links>
            </div>
            <Badges>
              <Seals><LetsEncrypt /><GoogleSeal /></Seals>
              <Social>
                <SocialLink $c="#3b5998"><FaFacebookF size={17} /></SocialLink>
                <SocialLink $c="#e1306c"><FaInstagram size={18} /></SocialLink>
                <SocialLink $c="#ff0000"><FaYoutube size={19} /></SocialLink>
                <SocialLink $c="#0077b5"><FaLinkedin size={18} /></SocialLink>
              </Social>
              <FootLogo><Logo width={262} height={84} /></FootLogo>
            </Badges>
          </Footer>
        </Page>
        <Scrollbar><ScrollTop><Arrow $up /></ScrollTop><Arrow /></Scrollbar>
      </Viewport>

      <Taskbar>
        <Start><Svg s={16} fill="#fff"><path d="M0 2.300 6.700 1.300V7.600H0zM7.500 1.200 16 0V7.600H7.500zM0 8.400H6.700V14.700L0 13.700zM7.500 8.400H16V16L7.500 14.800z" fill="#fff" /></Svg></Start>
        <TaskSearch>
          <Svg s={17} v={17} stroke="#222" strokeWidth="1.400"><circle cx="10.500" cy="6.500" r="5.500" /><path d="M6.500 10.500.5 16.500" /></Svg>
          <span>Pesquisar</span>
          <Brand><BraveoMark /></Brand>
        </TaskSearch>
        <TaskIcons>
          {tasks.map(([icon, open, on], i) => <Task key={i} $open={open} $on={on}>{icon}</Task>)}
        </TaskIcons>
        <Tray>
          <Weather $ls={-0.33}>
            <Svg s={24} v={24} stroke="#fff" strokeWidth="1.400"><path d="M1 4.500h19v15H3q-2 0-2-2zM20 8h3v9q0 2.500-3 2.500M4 8h13M4 11h6v5H4zM12 11.500h5M12 14h5M12 16.500h5" /></Svg>
            <span>29°C</span><span>Pred. nublado</span>
          </Weather>
          <TrayIcons>
            <Svg s={14} v={14} stroke="#fff" strokeWidth="1.300"><path d="M1 10l6-6 6 6" /></Svg>
            <Svg s={14} v={16} stroke="#fff" strokeWidth="1.200"><path d="M2.500 4.500h8v7h-8zM10.500 8l3-2v5l-3-2M3 2q4-2.500 8 0M3 14q4 2.500 8 0" /></Svg>
            <Svg s={16} v={17} stroke="#fff" strokeWidth="1.200"><path d="M1 3.500 15.500 1v14L1 13.500zM5 8q1-3 5-2M11 9q-1 3-5 2M10 4v2H8" /><circle cx="13" cy="13" r="3.800" fill="#ff9500" stroke="none" /></Svg>
            <Svg s={16} v={17} stroke="#fff" strokeWidth="1.200"><path d="M5 3.500h11v8H5zM10.500 11.500v3.500M7 15h7M1 2h4v4H1zM3 6v5h2" /></Svg>
            <Svg s={16} v={17} stroke="#fff" strokeWidth="1.200"><path d="M1 6h3l4-4v12L4 10.500H1zM10 6q1.500 2.300 0 4.500M12 4q3 4.300 0 8.500M14 2.500q4 5.500 0 11.500" /></Svg>
          </TrayIcons>
          <Clock>14:41<br />27/01/2025</Clock>
          <Svg s={25} v={25}><path d="M1 3h16v12H9l-3 3v-3H1z" fill="#fff" /><path d="M4 6.500h10M4 9h10M4 11.500h7" stroke="#1d1c28" /><circle cx="16" cy="17.500" r="8" fill="#3a3a42" stroke="#85858c" /><text x="16" y="21.500" textAnchor="middle" fontFamily="Open Sans" fontWeight="700" fontSize="11" fill="#fff">5</text></Svg>
          <Desktop />
        </Tray>
      </Taskbar>
    </Screen>
  );
}
